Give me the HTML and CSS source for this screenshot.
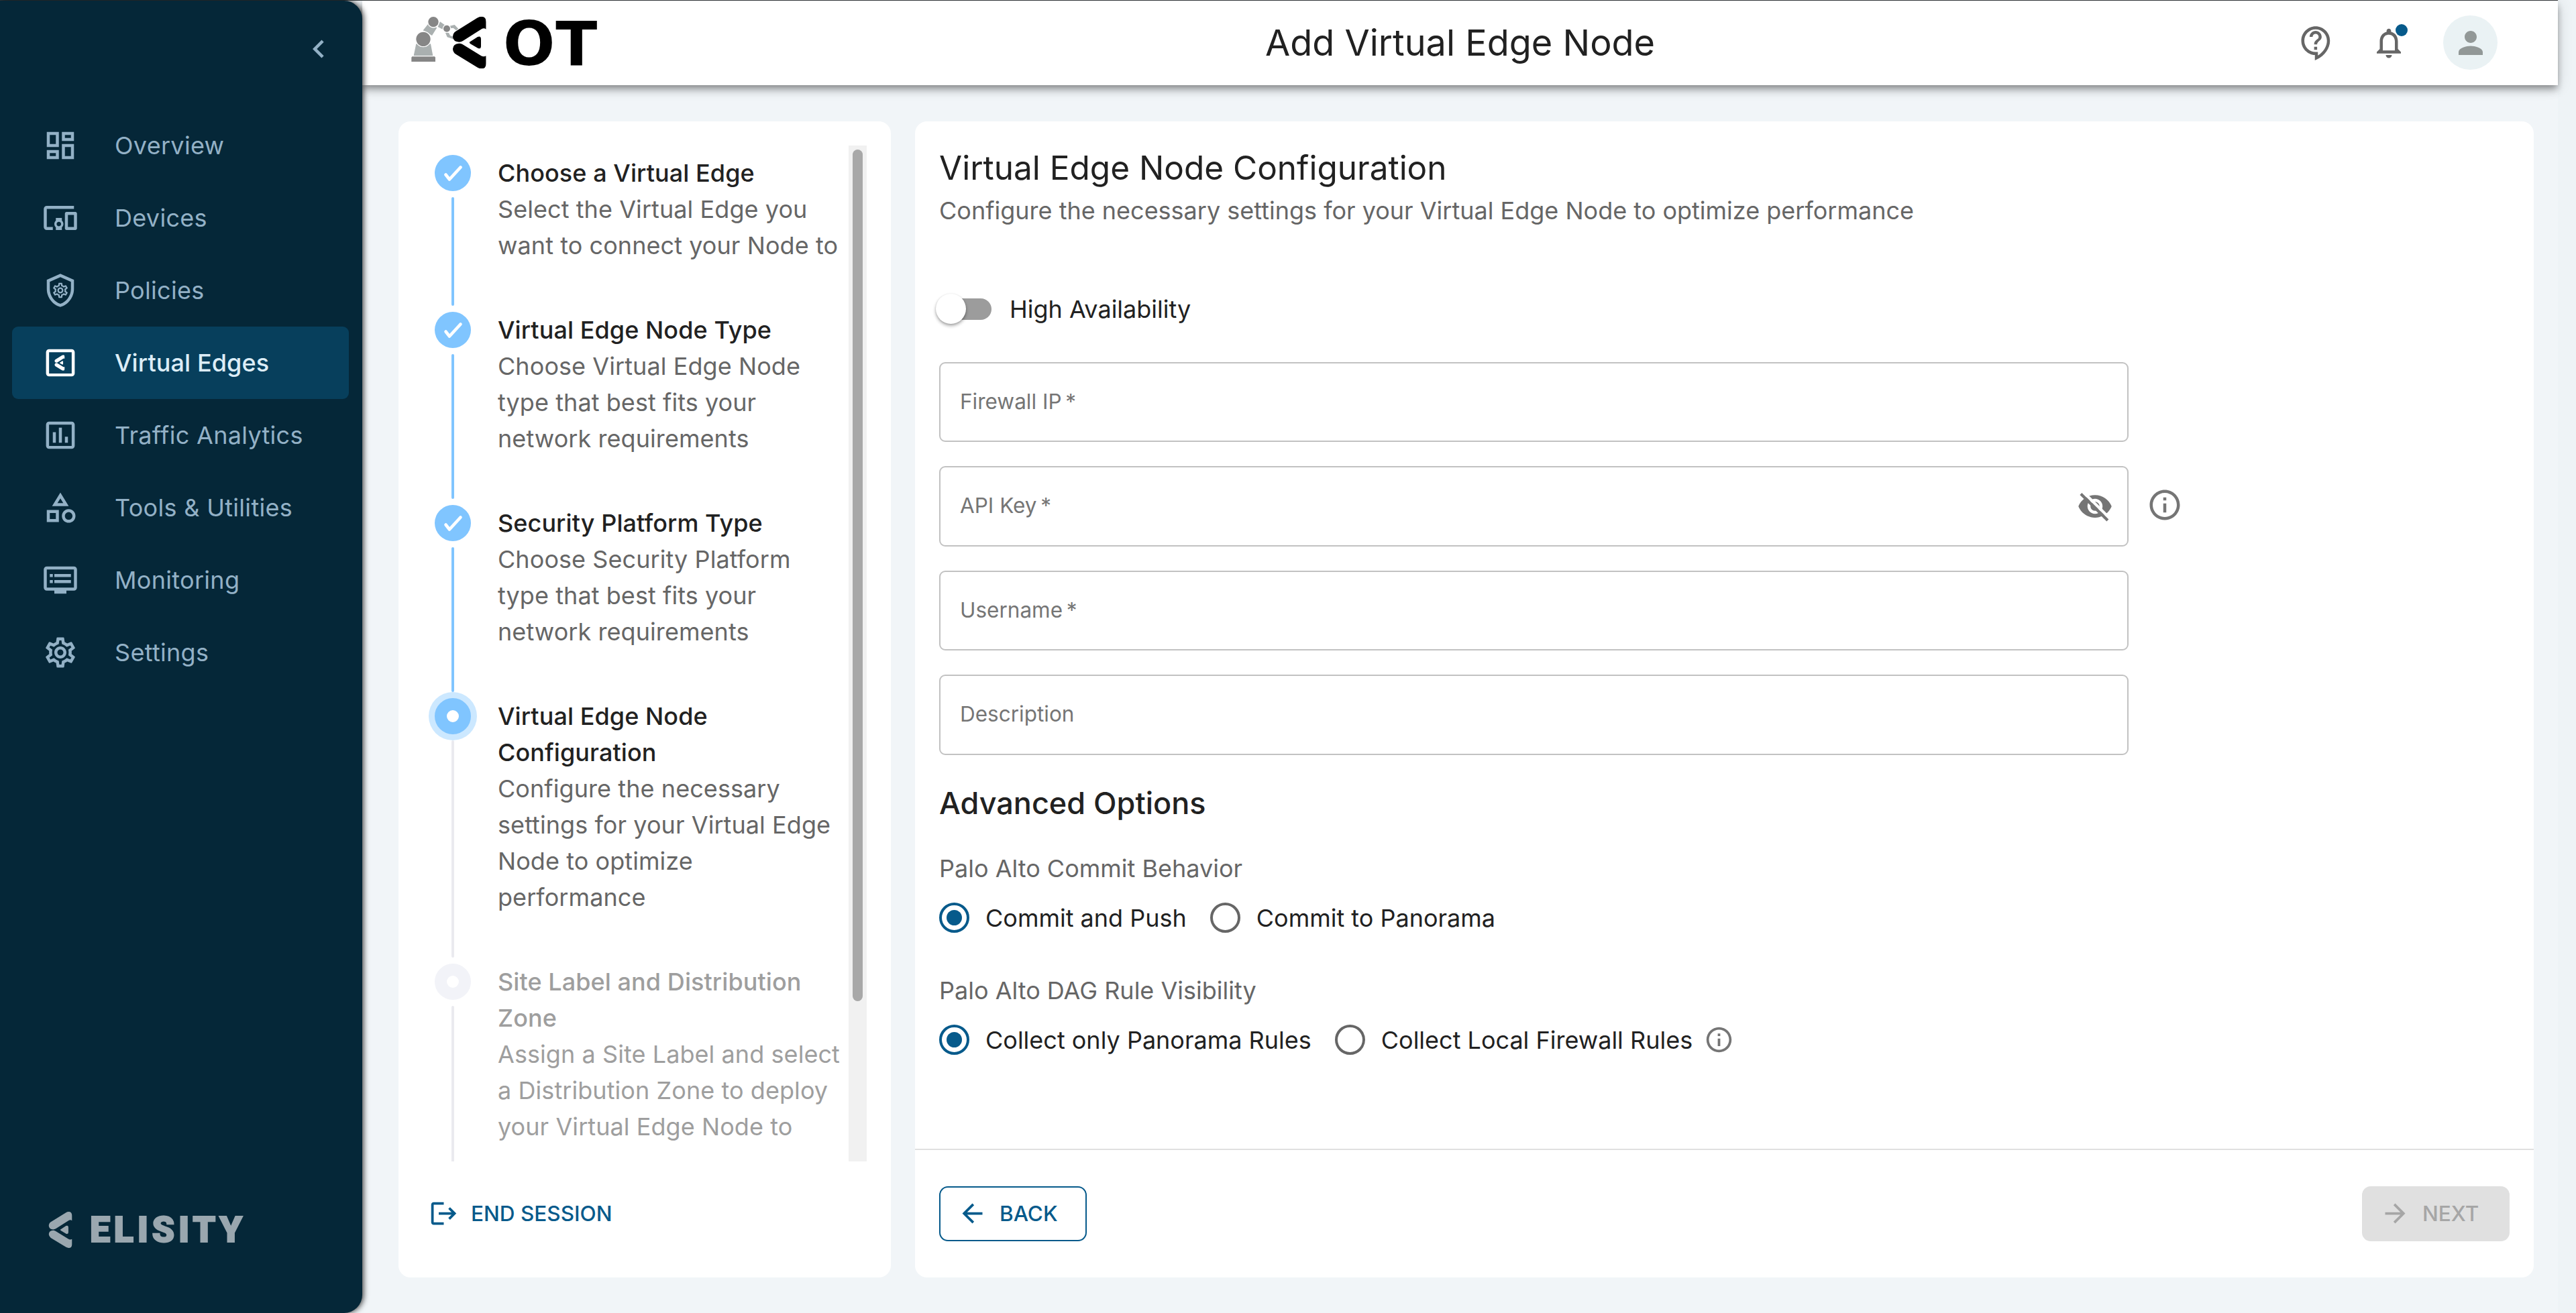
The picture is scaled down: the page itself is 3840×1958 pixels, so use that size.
FILE: index.html
```html
<!DOCTYPE html>
<html lang="en">
<head>
    <meta charset="UTF-8">
    <meta name="viewport" content="width=device-width, initial-scale=1.0">
    <title>Add Virtual Edge Node</title>
    <link rel="stylesheet" href="styles.css">
</head>
<body>
    <!-- shared shapes -->
    <svg class="defs" width="0" height="0">
        <symbol id="mark" viewBox="255 46 149 233">
            <path d="M404 103V70Q404 46 383 46Q374 46 364 52L268 112Q255 120 255 137Q257 159 283 160Q292 160 300 155L385 101Q395 96 404 103Z"/>
            <path d="M404 222V256Q404 279 383 279Q374 279 366 274L268 214Q255 205 255 190Q257 167 283 166Q290 166 298 170L382 222Q393 228 404 222Z"/>
            <path d="M332 159L366 137Q381 131 381 148V178Q381 192 368 188L332 167Q327 163 332 159Z"/>
        </symbol>
        <symbol id="gear" viewBox="0 0 24 24">
            <path d="M19.43 12.98c.04-.32.07-.64.07-.98 0-.34-.03-.66-.07-.98l2.11-1.65c.19-.15.24-.42.12-.64l-2-3.46c-.09-.16-.26-.25-.44-.25-.06 0-.12.01-.17.03l-2.49 1c-.52-.4-1.08-.73-1.69-.98l-.38-2.65C14.46 2.18 14.25 2 14 2h-4c-.25 0-.46.18-.49.42l-.38 2.65c-.61.25-1.17.59-1.69.98l-2.49-1c-.06-.02-.12-.03-.18-.03-.17 0-.34.09-.43.25l-2 3.46c-.13.22-.07.49.12.64l2.11 1.65c-.04.32-.07.65-.07.98 0 .33.03.66.07.98l-2.11 1.65c-.19.15-.24.42-.12.64l2 3.46c.09.16.26.25.44.25.06 0 .12-.01.17-.03l2.49-1c.52.4 1.08.73 1.69.98l.38 2.65c.03.24.24.42.49.42h4c.25 0 .46-.18.49-.42l.38-2.65c.61-.25 1.17-.59 1.69-.98l2.49 1c.06.02.12.03.18.03.17 0 .34-.09.43-.25l2-3.46c.12-.22.07-.49-.12-.64l-2.11-1.65zm-1.98-1.71c.04.31.05.52.05.73 0 .21-.02.43-.05.73l-.14 1.13.89.7 1.08.84-.7 1.21-1.27-.51-1.04-.42-.9.68c-.43.32-.84.56-1.25.73l-1.06.43-.16 1.13-.2 1.35h-1.4l-.19-1.35-.16-1.13-1.06-.43c-.43-.18-.83-.41-1.23-.71l-.91-.7-1.06.43-1.27.51-.7-1.21 1.08-.84.89-.7-.14-1.13c-.03-.31-.05-.54-.05-.74s.02-.43.05-.73l.14-1.13-.89-.7-1.08-.84.7-1.21 1.27.51 1.04.42.9-.68c.43-.32.84-.56 1.25-.73l1.06-.43.16-1.13.2-1.35h1.39l.19 1.35.16 1.13 1.06.43c.43.18.83.41 1.23.71l.91.7 1.06-.43 1.27-.51.7 1.21-1.07.85-.89.7.14 1.13zM12 8c-2.21 0-4 1.79-4 4s1.79 4 4 4 4-1.79 4-4-1.79-4-4-4zm0 6c-1.1 0-2-.9-2-2s.9-2 2-2 2 .9 2 2-.9 2-2 2z"/>
        </symbol>
        <symbol id="info" viewBox="0 0 24 24">
            <path d="M11 7h2v2h-2zm0 4h2v6h-2zm1-9C6.48 2 2 6.48 2 12s4.48 10 10 10 10-4.48 10-10S17.52 2 12 2zm0 18c-4.41 0-8-3.59-8-8s3.59-8 8-8 8 3.59 8 8-3.59 8-8 8z"/>
        </symbol>
        <symbol id="check" viewBox="0 0 54 54">
            <path d="M16.5 29.5L22 36.5L38.5 18.5" fill="none" stroke="#fff" stroke-width="4.6" stroke-linecap="round" stroke-linejoin="round"/>
        </symbol>
    </svg>

    <div class="app">
        <aside class="sidebar">
            <div class="collapse">
                <svg class="icon" viewBox="0 0 24 24"><path d="M15.41 7.41 14 6l-6 6 6 6 1.41-1.41L10.83 12z"/></svg>
            </div>
            <nav>
                <a class="nav-item">
                    <svg class="icon" viewBox="0 0 24 24"><path d="M19 5v2h-4V5h4M9 5v6H5V5h4m10 8v6h-4v-6h4M9 17v2H5v-2h4M21 3h-8v6h8V3zM11 3H3v10h8V3zm10 8h-8v10h8V11zm-10 4H3v6h8v-6z"/></svg>
                    <span>Overview</span>
                </a>
                <a class="nav-item">
                    <svg class="icon" viewBox="0 0 24 24"><path d="M3 6h18V4H3c-1.1 0-2 .9-2 2v12c0 1.1.9 2 2 2h4v-2H3V6zm10 6H9v1.78c-.61.55-1 1.33-1 2.22s.39 1.67 1 2.22V20h4v-1.78c.61-.55 1-1.34 1-2.22s-.39-1.67-1-2.22V12zm-2 5.5c-.83 0-1.5-.67-1.5-1.5s.67-1.5 1.5-1.5 1.5.67 1.5 1.5-.67 1.5-1.5 1.5zM22 8h-6c-.5 0-1 .5-1 1v10c0 .5.5 1 1 1h6c.5 0 1-.5 1-1V9c0-.5-.5-1-1-1zm-1 10h-4v-8h4v8z"/></svg>
                    <span>Devices</span>
                </a>
                <a class="nav-item">
                    <svg class="icon" viewBox="0 0 24 24">
                        <path d="M12 1 3 5v6c0 5.55 3.84 10.74 9 12 5.16-1.26 9-6.45 9-12V5l-9-4zm7 10c0 4.52-2.98 8.69-7 9.93-4.02-1.24-7-5.41-7-9.93V6.3l7-3.11 7 3.11V11z"/>
                        <use href="#gear" x="6" y="6" width="12" height="12"/>
                    </svg>
                    <span>Policies</span>
                </a>
                <a class="nav-item active">
                    <svg class="icon" viewBox="0 0 24 24">
                        <path d="M19.5 19.1h-15V5h15v14.1zm0-16.1h-15c-1.1 0-2 .9-2 2v14c0 1.1.9 2 2 2h15c1.1 0 2-.9 2-2V5c0-1.1-.9-2-2-2z"/>
                        <use href="#mark" x="8" y="6.8" width="7" height="10.4"/>
                    </svg>
                    <span>Virtual Edges</span>
                </a>
                <a class="nav-item">
                    <svg class="icon" viewBox="0 0 24 24"><path d="M9 17H7v-7h2v7zm4 0h-2V7h2v10zm4 0h-2v-4h2v4zm2.5 2.1h-15V5h15v14.1zm0-16.1h-15c-1.1 0-2 .9-2 2v14c0 1.1.9 2 2 2h15c1.1 0 2-.9 2-2V5c0-1.1-.9-2-2-2z"/></svg>
                    <span>Traffic Analytics</span>
                </a>
                <a class="nav-item">
                    <svg class="icon" viewBox="0 0 24 24"><path d="M12 2l-5.5 9h11L12 2zm0 3.84L13.93 9h-3.87L12 5.84zM17.5 13c-2.49 0-4.5 2.01-4.5 4.5s2.01 4.5 4.5 4.5 4.5-2.01 4.5-4.5-2.01-4.5-4.5-4.5zm0 7c-1.38 0-2.5-1.12-2.5-2.5s1.12-2.5 2.5-2.5 2.5 1.12 2.5 2.5-1.12 2.5-2.5 2.5zM3 21.5h8v-8H3v8zm2-6h4v4H5v-4z"/></svg>
                    <span>Tools &amp; Utilities</span>
                </a>
                <a class="nav-item">
                    <svg class="icon" viewBox="0 0 24 24"><path d="M21 3H3c-1.1 0-2 .9-2 2v12c0 1.1.9 2 2 2h5v2h8v-2h5c1.1 0 1.99-.9 1.99-2L23 5c0-1.1-.9-2-2-2zm0 14H3V5h18v12zm-2-9H8v2h11V8zm0 4H8v2h11v-2zM7 8H5v2h2V8zm0 4H5v2h2v-2z"/></svg>
                    <span>Monitoring</span>
                </a>
                <a class="nav-item">
                    <svg class="icon"><use href="#gear"/></svg>
                    <span>Settings</span>
                </a>
            </nav>
            <div class="brand">
                <svg class="brand-mark"><use href="#mark"/></svg>
                <span>ELISITY</span>
            </div>
        </aside>

        <div class="page">
            <header class="topbar">
                <div class="logo">
                    <svg class="logo-pic" viewBox="69 45 336 235">
                        <g fill="#aab0b0">
                            <path d="M91 168H156L166 221H80Z"/>
                            <path d="M122 108L144 80L184 96L162 131Z"/>
                            <path d="M198 69L219 84L211 104L188 92Z"/>
                            <path d="M238 89L263 83L280 101L270 108L257 97L243 99Z"/>
                            <path d="M222 119L237 119L243 131L260 137L257 147L230 138Z"/>
                        </g>
                        <g fill="#868686" stroke="#fff" stroke-width="4">
                            <circle cx="123" cy="147" r="34"/>
                            <circle cx="168" cy="70" r="25"/>
                            <circle cx="228" cy="100" r="17"/>
                        </g>
                        <path fill="#868686" d="M73 225H174L177 229V248H70V229Z"/>
                        <use href="#mark" x="255" y="46" width="149" height="233"/>
                    </svg>
                    <span class="logo-text">OT</span>
                </div>
                <h1>Add Virtual Edge Node</h1>
                <div class="actions">
                    <svg class="icon" viewBox="0 0 24 24"><path d="M11 23.59v-3.6c-5.01-.26-9-4.42-9-9.49C2 5.26 6.26 1 11.5 1S21 5.26 21 10.5c0 4.95-3.44 9.93-8.57 12.4l-1.43.69zM11.5 3C7.36 3 4 6.36 4 10.5S7.36 18 11.5 18H13v2.3c3.64-2.3 6-6.08 6-9.8C19 6.36 15.64 3 11.5 3zm-1 11.5h2v2h-2zm2-1.5h-2c0-3.25 3-3 3-5 0-1.1-.9-2-2-2s-2 .9-2 2h-2c0-2.21 1.79-4 4-4s4 1.79 4 4c0 2.5-3 2.75-3 5z"/></svg>
                    <div class="bell">
                        <svg class="icon" viewBox="0 0 24 24"><path d="M12 22c1.1 0 2-.9 2-2h-4c0 1.1.9 2 2 2zm6-6v-5c0-3.07-1.63-5.64-4.5-6.32V4c0-.83-.67-1.5-1.5-1.5s-1.5.67-1.5 1.5v.68C7.64 5.36 6 7.92 6 11v5l-2 2v1h16v-1l-2-2zm-2 1H8v-6c0-2.48 1.51-4.5 4-4.5s4 2.02 4 4.5v6z"/></svg>
                        <span class="dot"></span>
                    </div>
                    <div class="avatar">
                        <svg class="icon" viewBox="0 0 24 24"><path d="M12 12c2.21 0 4-1.79 4-4s-1.79-4-4-4-4 1.79-4 4 1.79 4 4 4zm0 2c-2.67 0-8 1.34-8 4v2h16v-2c0-2.66-5.33-4-8-4z"/></svg>
                    </div>
                </div>
            </header>

            <main class="content">
                <section class="card steps-card">
                    <div class="steps-scroll">
                        <ol class="steps">
                            <li class="step done">
                                <div class="rail"><svg class="bullet"><use href="#check"/></svg><span class="line"></span></div>
                                <div class="step-text">
                                    <h3>Choose a Virtual Edge</h3>
                                    <p>Select the Virtual Edge you<br>want to connect your Node to</p>
                                </div>
                            </li>
                            <li class="step done">
                                <div class="rail"><svg class="bullet"><use href="#check"/></svg><span class="line"></span></div>
                                <div class="step-text">
                                    <h3>Virtual Edge Node Type</h3>
                                    <p>Choose Virtual Edge Node<br>type that best fits your<br>network requirements</p>
                                </div>
                            </li>
                            <li class="step done">
                                <div class="rail"><svg class="bullet"><use href="#check"/></svg><span class="line"></span></div>
                                <div class="step-text">
                                    <h3>Security Platform Type</h3>
                                    <p>Choose Security Platform<br>type that best fits your<br>network requirements</p>
                                </div>
                            </li>
                            <li class="step current">
                                <div class="rail"><span class="bullet"></span><span class="line"></span></div>
                                <div class="step-text">
                                    <h3>Virtual Edge Node<br>Configuration</h3>
                                    <p>Configure the necessary<br>settings for your Virtual Edge<br>Node to optimize<br>performance</p>
                                </div>
                            </li>
                            <li class="step todo">
                                <div class="rail"><span class="bullet"></span><span class="line"></span></div>
                                <div class="step-text">
                                    <h3>Site Label and Distribution<br>Zone</h3>
                                    <p>Assign a Site Label and select<br>a Distribution Zone to deploy<br>your Virtual Edge Node to</p>
                                </div>
                            </li>
                        </ol>
                        <div class="track"><div class="thumb"></div></div>
                    </div>
                    <a class="end-session">
                        <svg class="icon-sm" viewBox="0 0 24 24"><path d="M17 7l-1.41 1.41L18.17 11H8v2h10.17l-2.58 2.58L17 17l5-5zM4 5h8V3H4c-1.1 0-2 .9-2 2v14c0 1.1.9 2 2 2h8v-2H4V5z"/></svg>
                        <span>END SESSION</span>
                    </a>
                </section>

                <section class="card config-card">
                    <form class="config">
                        <h2>Virtual Edge Node Configuration</h2>
                        <p class="lead">Configure the necessary settings for your Virtual Edge Node to optimize performance</p>

                        <label class="switch-row">
                            <span class="switch"><span class="knob"></span></span>
                            <span>High Availability</span>
                        </label>

                        <div class="fields">
                            <input type="text" placeholder="Firewall IP&#8201;*">
                            <div class="field-row">
                                <div class="secret">
                                    <input type="password" placeholder="API Key&#8201;*">
                                    <svg class="icon eye" viewBox="0 0 24 24">
                                        <path d="M12 4.5C7 4.5 2.73 7.61 1 12c1.73 4.39 6 7.5 11 7.5s9.27-3.11 11-7.5c-1.73-4.39-6-7.5-11-7.5zM12 17c-2.76 0-5-2.24-5-5s2.24-5 5-5 5 2.24 5 5-2.24 5-5 5zm0-8c-1.66 0-3 1.34-3 3s1.34 3 3 3 3-1.34 3-3-1.34-3-3-3z"/>
                                        <path d="M4.2 2.6L22 20.2" stroke="#fff" stroke-width="1.9"/>
                                        <path d="M2.6 3.8L20.4 21.3" stroke="#757575" stroke-width="1.9"/>
                                    </svg>
                                </div>
                                <svg class="icon"><use href="#info"/></svg>
                            </div>
                            <input type="text" placeholder="Username&#8201;*">
                            <input type="text" placeholder="Description">
                        </div>

                        <h4>Advanced Options</h4>
                        <p class="group-label">Palo Alto Commit Behavior</p>
                        <div class="radios">
                            <label class="radio"><span class="ring on"></span>Commit and Push</label>
                            <label class="radio"><span class="ring"></span>Commit to Panorama</label>
                        </div>
                        <p class="group-label second">Palo Alto DAG Rule Visibility</p>
                        <div class="radios">
                            <label class="radio"><span class="ring on"></span>Collect only Panorama Rules</label>
                            <label class="radio"><span class="ring"></span>Collect Local Firewall Rules<svg class="icon-sm"><use href="#info"/></svg></label>
                        </div>
                    </form>
                    <footer class="card-footer">
                        <button class="btn back">
                            <svg class="icon-sm" viewBox="0 0 24 24"><path d="M20 11H7.83l5.59-5.59L12 4l-8 8 8 8 1.41-1.41L7.83 13H20v-2z"/></svg>
                            <span>BACK</span>
                        </button>
                        <button class="btn next" disabled>
                            <svg class="icon-sm" viewBox="0 0 24 24"><path d="M12 4l-1.41 1.41L16.17 11H4v2h12.17l-5.58 5.59L12 20l8-8z"/></svg>
                            <span>NEXT</span>
                        </button>
                    </footer>
                </section>
            </main>
        </div>
    </div>
</body>
</html>
```
FILE: styles.css
```css
* {
    box-sizing: border-box;
}
body {
    margin: 0;
    overflow: hidden;
    font-family: Inter, "Liberation Sans", sans-serif;
    font-size: 36px;
    color: #212121;
    background: #eef3f6;
}
h1, h2, h3, h4, p, ol {
    margin: 0;
    padding: 0;
    font-weight: 400;
}
svg {
    fill: currentColor;
    flex-shrink: 0;
}
.defs {
    position: absolute;
}
.icon {
    width: 54px;
    height: 54px;
}
.icon-sm {
    width: 45px;
    height: 45px;
}
.app {
    display: flex;
    height: 1958px;
    width: 3813px;
    border-top: 1px solid #33383b;
    background: #f1f5f8;
}

/* sidebar */
.sidebar {
    position: relative;
    z-index: 2;
    display: flex;
    flex-direction: column;
    width: 540px;
    flex-shrink: 0;
    color: #93b1c6;
    background: #052738;
    border-radius: 0 27px 27px 0;
    box-shadow: 2px 0 8px rgba(0, 0, 0, 0.75);
}
.collapse {
    display: flex;
    justify-content: flex-end;
    height: 162px;
    padding: 45px 38px 0 0;
}
.nav-item {
    display: flex;
    align-items: center;
    gap: 54px;
    height: 108px;
    margin: 0 20px 0 18px;
    padding-left: 45px;
    border-radius: 9px;
    letter-spacing: 0.3px;
}
.nav-item.active {
    background: #073f5c;
    color: #dcedf7;
    font-weight: 500;
    letter-spacing: 0.1px;
}
.nav-item.active .icon {
    color: #fff;
}
.brand {
    display: flex;
    align-items: center;
    gap: 26px;
    margin-top: auto;
    padding: 0 0 96px 72px;
    color: #9aa7af;
    font-family: Roboto, sans-serif;
    font-size: 54px;
    font-weight: 900;
    line-height: 56px;
    letter-spacing: 5.6px;
    -webkit-text-stroke: 2px #9aa7af;
}
.brand-mark {
    width: 36px;
    height: 54px;
}

/* top bar */
.page {
    display: flex;
    flex-direction: column;
    flex: 1;
}
.topbar {
    position: relative;
    display: grid;
    grid-template-columns: 1fr auto 1fr;
    align-items: center;
    height: 126px;
    padding: 0 73px;
    background: #fff;
    box-shadow: 0 5px 9px -2px rgba(0, 0, 0, 0.3), 0 9px 11px rgba(0, 0, 0, 0.16), 0 2px 22px rgba(0, 0, 0, 0.12);
}
.logo {
    display: flex;
    align-items: center;
    color: #000;
}
.logo-pic {
    width: 112px;
    height: 79px;
}
.logo-text {
    margin-left: 25px;
    padding-top: 4px;
    font: bold 91px/100px "DejaVu Sans", sans-serif;
    letter-spacing: 1px;
}
h1 {
    font-size: 54px;
    line-height: 72px;
}
.actions {
    display: flex;
    align-items: center;
    justify-content: flex-end;
    gap: 54px;
    margin-right: 17px;
    color: #666;
}
.bell {
    position: relative;
    height: 54px;
}
.dot {
    position: absolute;
    top: -1px;
    right: -1px;
    width: 18px;
    height: 18px;
    border-radius: 50%;
    background: #065a8b;
}
.avatar {
    display: flex;
    align-items: center;
    justify-content: center;
    width: 81px;
    height: 81px;
    border-radius: 50%;
    background: #eaf2f4;
    color: #929897;
}

/* content */
.content {
    display: flex;
    gap: 36px;
    height: 1832px;
    padding: 54px 36px 53px 54px;
}
.card {
    display: flex;
    flex-direction: column;
    background: #fff;
    border-radius: 18px;
}
.steps-card {
    width: 734px;
    flex-shrink: 0;
    padding: 36px 36px 0 45px;
}
.steps-scroll {
    display: flex;
    justify-content: space-between;
    height: 1515px;
    overflow: hidden;
}
.steps {
    list-style: none;
    padding-top: 14px;
}
.step {
    display: flex;
    gap: 31px;
    line-height: 54px;
    letter-spacing: 0.07px;
    white-space: nowrap;
}
.rail {
    display: flex;
    flex-direction: column;
    align-items: center;
    width: 72px;
}
.bullet {
    width: 54px;
    height: 54px;
    border-radius: 50%;
    background: #80c5ff;
    flex-shrink: 0;
}
.line {
    flex: 1;
    width: 4px;
    margin: 9px 0;
    border-radius: 2px;
    background: #80c5ff;
}
.step-text {
    padding-bottom: 72px;
}
.step h3 {
    font-size: 36px;
    font-weight: 500;
}
.step p {
    color: #666;
}
.current .bullet {
    border: 18px solid #80c5ff;
    background: #fff;
    box-shadow: 0 0 0 9px #cce8ff;
}
.current .line, .todo .line {
    background: #eaeaef;
}
.todo .bullet {
    border: 18px solid #f2f3f8;
    background: #fff;
}
.step.todo h3, .step.todo p {
    color: #9e9e9e;
}
.track {
    width: 27px;
    flex-shrink: 0;
    background: #f1f1f1;
    padding: 6px;
}
.thumb {
    height: 1270px;
    border-radius: 8px;
    background: #a8a8a8;
}
.end-session {
    display: flex;
    align-items: center;
    gap: 18px;
    height: 156px;
    font-size: 31.5px;
    font-weight: 500;
    color: #065a8b;
}

.config-card {
    flex: 1;
}
.config {
    flex: 1;
    padding: 36px;
}
h2 {
    font-size: 49.5px;
    line-height: 66px;
}
.lead {
    line-height: 62px;
    color: #666;
}
.switch-row {
    display: flex;
    align-items: center;
    gap: 27px;
    height: 54px;
    margin-top: 89px;
}
.switch {
    position: relative;
    width: 77px;
    height: 32px;
    margin-left: 1px;
    border-radius: 16px;
    background: #9c9c9c;
}
.knob {
    position: absolute;
    left: -6px;
    top: -7px;
    width: 45px;
    height: 45px;
    border-radius: 50%;
    background: #fff;
    box-shadow: 0 3px 5px rgba(0, 0, 0, 0.3), 0 1px 3px rgba(0, 0, 0, 0.15);
}
.fields {
    display: flex;
    flex-direction: column;
    gap: 36.25px;
    width: 1773px;
    margin-top: 52px;
}
input {
    display: block;
    width: 1773px;
    height: 119.25px;
    padding: 0 29px 3px;
    border: 2px solid #c2c2c2;
    border-radius: 9px;
    background: #fff;
    font-family: inherit;
    font-size: 31.5px;
}
input::placeholder {
    color: #757575;
    opacity: 1;
}
.field-row {
    display: flex;
    align-items: center;
    gap: 27px;
    color: #757575;
}
.field-row > .icon {
    margin-bottom: 4px;
}
.secret {
    position: relative;
}
.eye {
    position: absolute;
    right: 23px;
    top: 33px;
}
h4 {
    margin-top: 36px;
    font-size: 45px;
    font-weight: 500;
    line-height: 72px;
}
.group-label {
    margin: 34px 0 20px;
    line-height: 54px;
    color: #666;
}
.group-label.second {
    margin-top: 54px;
}
.radios {
    display: flex;
    gap: 35px;
}
.radio {
    display: flex;
    align-items: center;
    height: 54px;
}
.ring {
    display: flex;
    align-items: center;
    justify-content: center;
    width: 45px;
    height: 45px;
    margin-right: 24px;
    border: 4.5px solid #666;
    border-radius: 50%;
}
.ring.on {
    border-color: #065a8b;
}
.ring.on::after {
    content: "";
    width: 23px;
    height: 23px;
    border-radius: 50%;
    background: #065a8b;
}
.radio .icon-sm {
    margin-left: 17px;
    color: #757575;
}
.card-footer {
    display: flex;
    align-items: center;
    justify-content: space-between;
    height: 192px;
    padding: 0 36px;
    border-top: 2px solid #e0e0e0;
}
.btn {
    display: flex;
    align-items: center;
    gap: 18px;
    width: 220px;
    height: 82px;
    padding: 0 0 1px 25px;
    border: 2px solid #065a8b;
    border-radius: 13px;
    background: #fff;
    font-family: inherit;
    font-size: 31.5px;
    font-weight: 500;
    color: #065a8b;
}
.btn.next {
    border-color: #e0e0e0;
    background: #e0e0e0;
    color: #a6a6a6;
}
```
